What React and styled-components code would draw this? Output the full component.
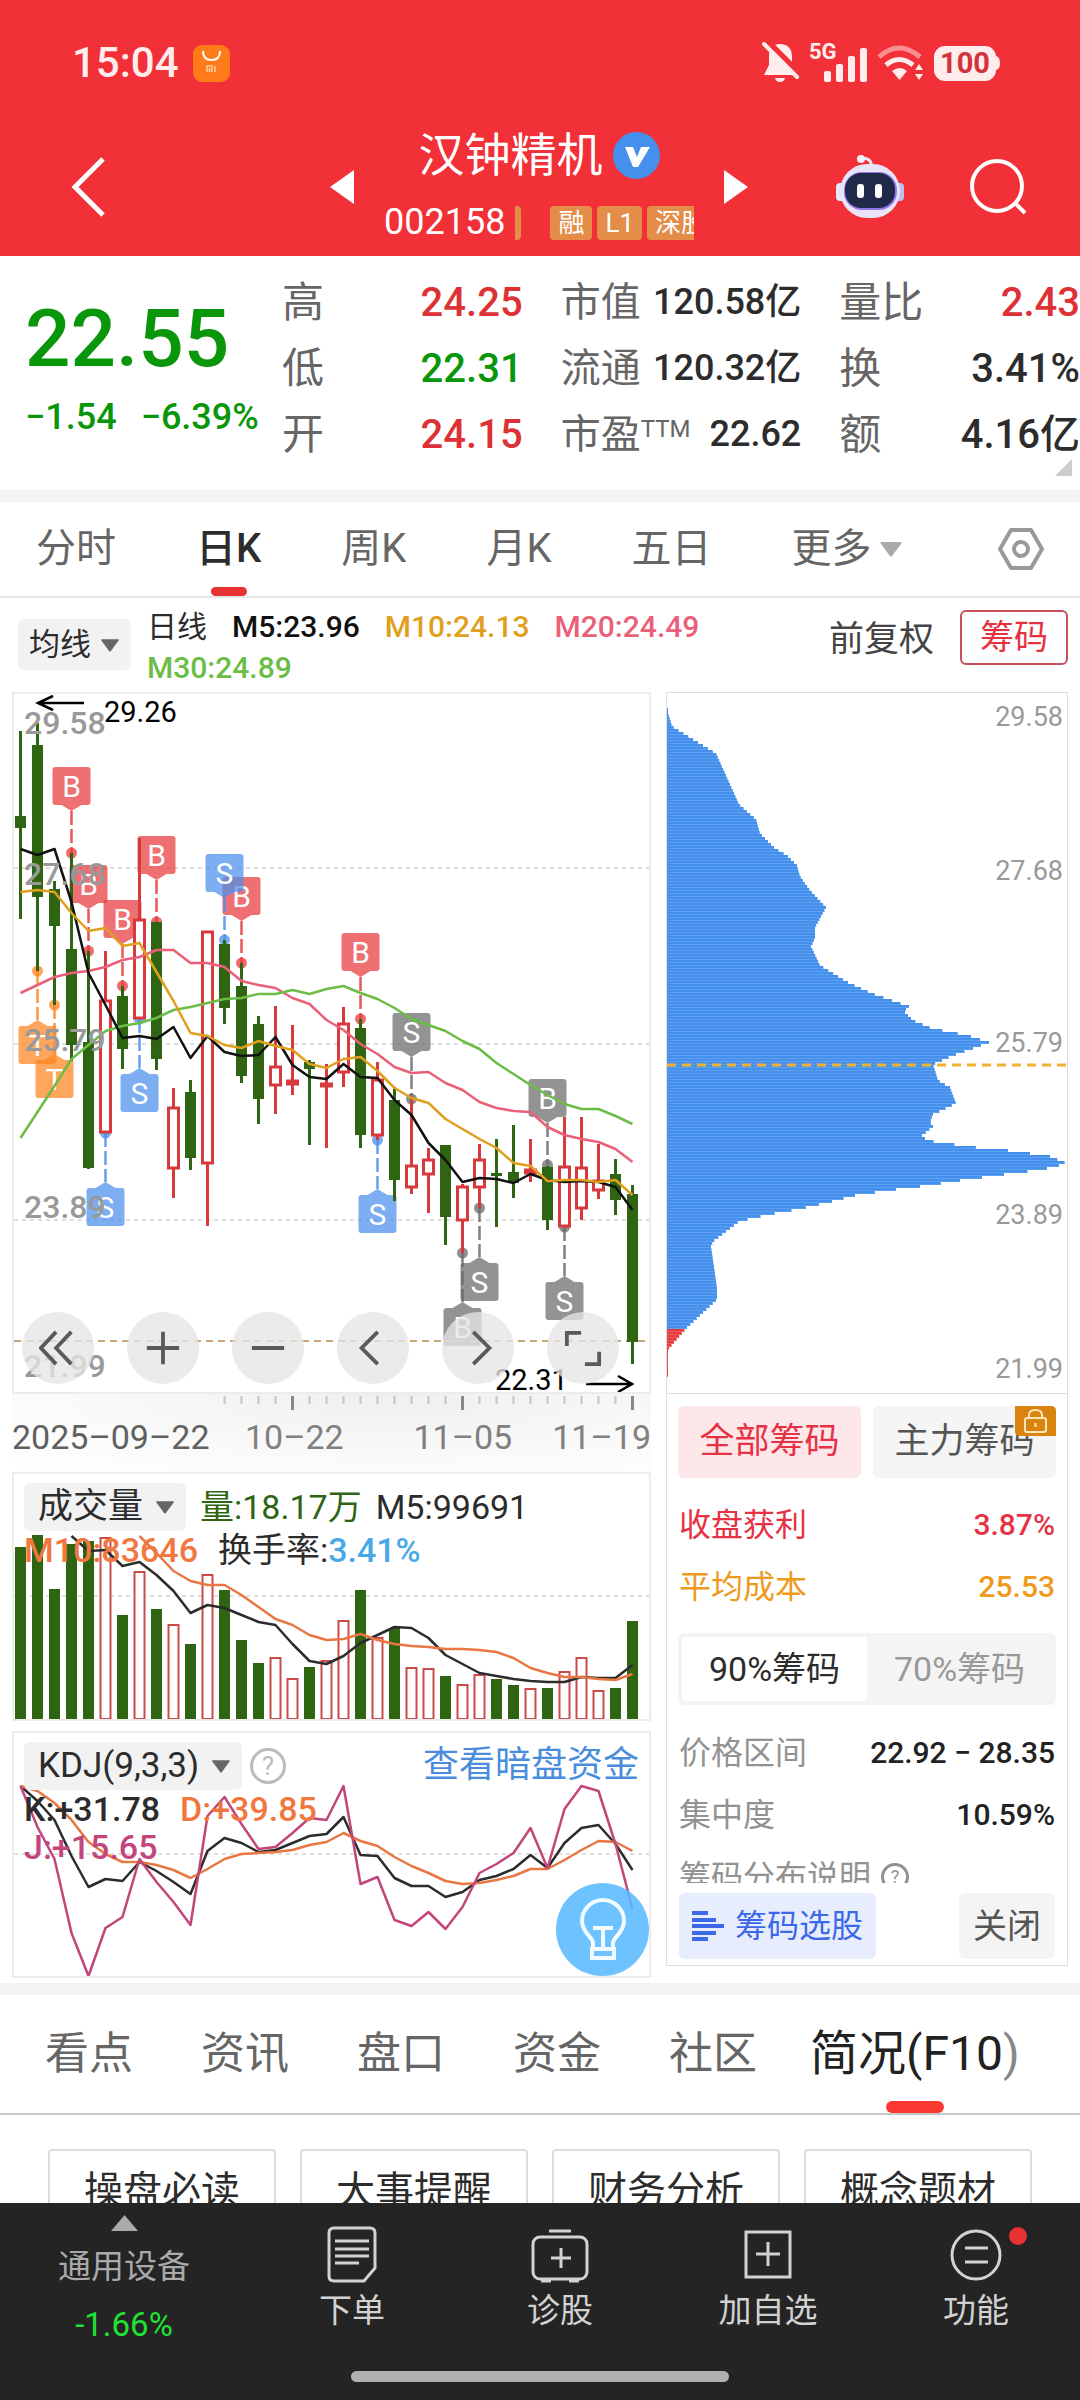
import React from "react";
import styled, { createGlobalStyle } from "styled-components";

const GREEN = "#2f6512";
const RED = "#d8393c";

const Global = createGlobalStyle`
  * { box-sizing: border-box; }
  html, body, #root { height: 100%; }
  body {
    margin: 0;
    background: #fff;
    color: #2c2c2c;
    font-family: Roboto, "Noto Sans CJK SC", sans-serif;
    line-height: 1.2;
  }
  button, select { font: inherit; color: inherit; }
  button { border: 0; padding: 0; background: none; cursor: pointer; }
  a { text-decoration: none; }
  svg { display: block; flex: none; }
`;

/* ---------- page frame ---------- */
const Page = styled.div`
  height: 100vh;
  display: flex;
  flex-direction: column;
`;
const Scroll = styled.main`
  flex: 1;
  min-height: 0;
  overflow: hidden;
`;
const Band = styled.div`
  height: 12px;
  background: #f4f4f4;
`;

/* ---------- header ---------- */
const Header = styled.header`
  flex: none;
  background: #f13038;
  color: #fff;
`;
const StatusBar = styled.div`
  display: flex;
  align-items: center;
  justify-content: space-between;
  height: 88px;
  padding: 38px 80px 0 72px;
`;
const StatusGroup = styled.div`
  display: flex;
  align-items: center;
  gap: ${(p) => p.$gap}px;
`;
const Clock = styled.span`
  font-size: 42px;
  font-weight: 500;
  line-height: 48px;
  color: #ffecec;
`;
const Signal = styled.span`
  display: flex;
  align-items: flex-end;
  height: 40px;
`;
const NetLabel = styled.span`
  align-self: flex-start;
  width: 15px;
  font-size: 22px;
  font-weight: 700;
  line-height: 18px;
  color: #ffecec;
`;
const Battery = styled.span`
  display: flex;
  align-items: center;
  justify-content: center;
  width: 62px;
  height: 35px;
  border-radius: 11px;
  background: #ffecec;
  color: #d2333a;
  font-size: 29px;
  font-weight: 700;
`;
const TitleBar = styled.div`
  display: grid;
  grid-template-columns: 1fr auto 1fr;
  align-items: center;
  height: 168px;
  padding: 30px 52px 0 50px;
`;
const IconButton = styled.button`
  display: flex;
  align-items: center;
  justify-content: center;
`;
const Back = styled.div`
  padding-left: 20px;
`;
const Switcher = styled.div`
  display: flex;
  align-items: center;
  gap: 30px;
`;
const StockInfo = styled.div`
  display: flex;
  flex-direction: column;
  align-items: center;
  gap: 22px;
  width: 310px;
  padding-bottom: 6px;
`;
const StockName = styled.h1`
  display: flex;
  align-items: center;
  gap: 10px;
  margin: 0;
  font-size: 46px;
  font-weight: 400;
  line-height: 56px;
  white-space: nowrap;
`;
const CodeRow = styled.div`
  display: flex;
  align-items: center;
  gap: 10px;
  width: 100%;
  height: 36px;
  font-size: 36px;
`;
const TagStrip = styled.div`
  flex: 1;
  display: flex;
  gap: 5px;
  overflow: hidden;
`;
const Tag = styled.span`
  flex: none;
  padding: 0 8px;
  border-radius: 4px;
  background: #e38d49;
  font-size: 26px;
  line-height: 34px;
`;
const TagTail = styled.span`
  flex: none;
  width: 6px;
  margin-right: 24px;
  border-radius: 0 4px 4px 0;
  background: #e38d49;
`;
const Actions = styled.div`
  display: flex;
  align-items: center;
  justify-content: flex-end;
  gap: 64px;
`;

/* ---------- quote ---------- */
const Quote = styled.section`
  position: relative;
  display: flex;
  padding: 14px 0 22px;
`;
const PriceBlock = styled.div`
  flex: none;
  width: 282px;
  padding: 21px 0 0 25px;
  color: #0a960a;
  font-weight: 500;
`;
const Price = styled.div`
  font-size: 80px;
  line-height: 96px;
`;
const Change = styled.div`
  display: flex;
  gap: 24px;
  font-size: 36px;
  line-height: 60px;
`;
const StatGrid = styled.dl`
  flex: 1;
  display: grid;
  grid-template-columns: repeat(3, 1fr);
  column-gap: 38px;
  margin: 0;
`;
const Stat = styled.div`
  display: flex;
  align-items: center;
  justify-content: space-between;
  height: 66px;
  white-space: nowrap;
`;
const StatLabel = styled.dt`
  display: flex;
  font-size: ${(p) => (p.$small ? 40 : 42)}px;
  color: #666;
`;
const Sup = styled.sup`
  font-size: 24px;
  line-height: 36px;
  align-self: flex-start;
`;
const StatValue = styled.dd`
  margin: 0;
  font-size: ${(p) => (p.$small ? 36 : 40)}px;
  font-weight: 500;
  color: ${(p) => p.$color || "#2c2c2c"};
`;
const Corner = styled.svg`
  position: absolute;
  right: 8px;
  bottom: 14px;
`;

/* ---------- period tabs ---------- */
const Tabs = styled.nav`
  display: flex;
  align-items: center;
  gap: 80px;
  height: 96px;
  padding: 0 36px;
  border-bottom: 2px solid #e6e6e6;
`;
const Tab = styled.button`
  position: relative;
  display: flex;
  align-items: center;
  gap: 8px;
  height: 94px;
  font-size: 40px;
  font-weight: ${(p) => (p.$active ? 500 : 400)};
  color: ${(p) => (p.$active ? "#2c2c2c" : "#666")};
  white-space: nowrap;
  &::after {
    content: "";
    display: ${(p) => (p.$active ? "block" : "none")};
    position: absolute;
    left: calc(50% - 18px);
    bottom: 0;
    width: 36px;
    height: 9px;
    border-radius: 5px;
    background: #e63232;
  }
`;
const Settings = styled(IconButton)`
  margin-left: auto;
`;

/* ---------- average row ---------- */
const AverageRow = styled.div`
  display: flex;
  height: 94px;
  padding: 0 12px 0 18px;
`;
const Picker = styled.label`
  position: relative;
  display: inline-flex;
  flex: none;
  margin-top: ${(p) => p.$drop || 0}px;
  height: ${(p) => p.$h}px;
  border-radius: 6px;
  background: #f2f2f2;
  svg {
    position: absolute;
    right: 12px;
    top: calc(50% - 6px);
    pointer-events: none;
  }
`;
const PickerSelect = styled.select`
  appearance: none;
  border: 0;
  padding: 0 ${(p) => p.$pr}px 0 ${(p) => p.$pl}px;
  background: none;
  font-size: ${(p) => p.$size}px;
  color: #2c2c2c;
`;
const Legend = styled.div`
  flex: 1;
  display: flex;
  flex-wrap: wrap;
  align-content: flex-start;
  column-gap: 25px;
  padding: 8px 40px 0 16px;
  font-size: 30px;
  line-height: 41px;
`;
const Ink = styled.span`
  color: ${(p) => p.$c};
  font-weight: ${(p) => (p.$medium ? 500 : 400)};
  white-space: nowrap;
`;
const Adjust = styled.button`
  align-self: flex-start;
  margin: 14px 26px 0 0;
  font-size: 35px;
  line-height: 56px;
  color: #444;
`;
const ChipToggle = styled.button`
  align-self: flex-start;
  margin-top: 12px;
  width: 108px;
  height: 55px;
  border: 2px solid #c8505c;
  border-radius: 6px;
  font-size: 34px;
  color: #e6323f;
`;

/* ---------- charts ---------- */
const Board = styled.div`
  display: grid;
  grid-template-columns: 639fr 402fr;
  gap: 15px;
  padding: 0 12px;
`;
const LeftColumn = styled.div`
  min-width: 0;
  display: flex;
  flex-direction: column;
`;
const Panel = styled.section`
  position: relative;
  border: 2px solid #ececec;
  margin-top: ${(p) => p.$mt || 0}px;
`;
const Plot = styled.svg`
  width: 100%;
  height: auto;
`;
const PlotHead = styled.div`
  position: absolute;
  inset: 0;
  padding: 9px 10px;
`;
const HeadLine = styled.div`
  display: flex;
  align-items: center;
  gap: ${(p) => p.$gap}px;
  height: 48px;
  font-size: 34px;
  white-space: nowrap;
`;
const SubLine = styled.div`
  display: flex;
  gap: 20px;
  font-size: 34px;
  line-height: 38px;
  white-space: nowrap;
`;
const Controls = styled.div`
  position: absolute;
  left: 8px;
  bottom: 8px;
  display: flex;
  gap: 33px;
`;
const RoundButton = styled.button`
  display: flex;
  align-items: center;
  justify-content: center;
  width: 72px;
  height: 72px;
  border-radius: 50%;
  background: rgba(230, 230, 230, 0.78);
`;
const DateAxis = styled.div`
  height: 78px;
  background: radial-gradient(ellipse at 60% 0, #efefef, #fafafa 60%, #fff);
`;
const Dates = styled.div`
  display: grid;
  grid-template-columns: 235fr 170fr 140fr 94fr;
  font-size: 34px;
  line-height: 38px;
  color: #808080;
  white-space: nowrap;
  & > :first-child { color: #606060; }
  & > :last-child { text-align: right; }
`;
const HelpButton = styled.button`
  width: ${(p) => p.$d}px;
  height: ${(p) => p.$d}px;
  border: 3px solid ${(p) => p.$c};
  border-radius: 50%;
  font-size: ${(p) => p.$d - 10}px;
  line-height: 1;
  color: ${(p) => p.$c};
`;
const DarkLink = styled.a`
  margin-left: auto;
  font-size: 36px;
  color: #4a8ddd;
`;
const BulbButton = styled.button`
  position: absolute;
  right: 0;
  bottom: 0;
  width: 93px;
  height: 93px;
`;

/* ---------- chip distribution ---------- */
const ChipPanel = styled.aside`
  min-width: 0;
  display: flex;
  flex-direction: column;
  margin-bottom: 17px;
  border: 1px solid #dedede;
`;
const ChipBody = styled.div`
  height: 490px;
  padding: 12px 11px 0;
  border-top: 1px solid #dedede;
  overflow: hidden;
`;
const ScopeRow = styled.div`
  display: grid;
  grid-template-columns: 1fr 1fr;
  gap: 12px;
  margin-bottom: 16px;
`;
const Scope = styled.button`
  position: relative;
  height: 72px;
  border-radius: 6px;
  font-size: 35px;
  background: ${(p) => (p.$on ? "#fee7e9" : "#f5f5f5")};
  color: ${(p) => (p.$on ? "#e63244" : "#555")};
  svg {
    position: absolute;
    top: 0;
    right: 0;
  }
`;
const Fact = styled.div`
  display: flex;
  align-items: center;
  justify-content: ${(p) => (p.$start ? "flex-start" : "space-between")};
  gap: 10px;
  height: 62px;
  padding: 0 1px;
  font-size: 32px;
  color: ${(p) => p.$c || "#929292"};
  white-space: nowrap;
`;
const FactValue = styled.strong`
  font-size: 30px;
  font-weight: 500;
  color: ${(p) => p.$c || "#222"};
`;
const Segments = styled.div`
  display: grid;
  grid-template-columns: 1fr 1fr;
  height: 72px;
  margin: 15px 0 17px;
  padding: 4px;
  border-radius: 6px;
  background: #f4f4f4;
`;
const Segment = styled.button`
  border-radius: 4px;
  font-size: 34px;
  background: ${(p) => (p.$on ? "#fff" : "none")};
  color: ${(p) => (p.$on ? "#2c2c2c" : "#999")};
`;
const ChipFoot = styled.div`
  display: flex;
  justify-content: space-between;
  padding: 10px 12px 6px;
`;
const FootButton = styled.button`
  display: flex;
  align-items: center;
  justify-content: center;
  gap: 11px;
  width: ${(p) => p.$w}px;
  height: 66px;
  border-radius: 6px;
  font-size: ${(p) => (p.$blue ? 32 : 34)}px;
  background: ${(p) => (p.$blue ? "#e8edfe" : "#f4f4f4")};
  color: ${(p) => (p.$blue ? "#3c68e8" : "#555")};
`;

/* ---------- info tabs ---------- */
const InfoTabs = styled.nav`
  display: flex;
  height: 120px;
  padding-left: 11px;
  border-bottom: 2px solid #c8c8c8;
`;
const InfoTab = styled.button`
  position: relative;
  padding: 0 ${(p) => (p.$active ? 19 : 34)}px;
  font-size: ${(p) => (p.$active ? 48 : 44)}px;
  color: ${(p) => (p.$active ? "#222" : "#666")};
  white-space: nowrap;
  span { color: #888; }
  &::after {
    content: "";
    display: ${(p) => (p.$active ? "block" : "none")};
    position: absolute;
    left: calc(50% - 29px);
    bottom: 0;
    width: 58px;
    height: 12px;
    border-radius: 6px;
    background: #fa3a32;
  }
`;
const Topics = styled.div`
  display: grid;
  grid-template-columns: repeat(4, 1fr);
  gap: 24px;
  padding: 34px 48px;
`;
const Topic = styled.a`
  height: 84px;
  border: 2px solid #dcdcdc;
  border-radius: 4px;
  font-size: 39px;
  line-height: 80px;
  text-align: center;
  color: #2c2c2c;
`;

/* ---------- bottom bar ---------- */
const BottomBar = styled.footer`
  flex: none;
  height: 197px;
  background: #242424;
  color: #d2d2d2;
`;
const NavItems = styled.nav`
  display: grid;
  grid-template-columns: 248fr repeat(4, 208fr);
  height: 168px;
`;
const NavItem = styled.button`
  position: relative;
  display: flex;
  flex-direction: column;
  align-items: center;
  padding-top: 22px;
  gap: 6px;
  font-size: 33px;
  line-height: 44px;
`;
const IndexItem = styled(NavItem)`
  padding-top: 12px;
  gap: 14px;
  color: #aaa;
  b { color: #1fe332; font-weight: 400; }
`;
const Dot = styled.i`
  position: absolute;
  left: calc(50% + 33px);
  top: 24px;
  width: 18px;
  height: 18px;
  border-radius: 50%;
  background: #e63232;
`;
const HomeBar = styled.div`
  width: 35%;
  height: 11px;
  margin: 0 auto;
  border-radius: 6px;
  background: #b0b0b0;
`;

/* ---------- chart data ---------- */
const px = (i) => 8.5 + 17 * i;
const path = (values, start = 0) =>
  values.map((v, k) => `${px(k + start)},${v}`).join(" ");

// [up?, high, body top, body bottom, low]
const CANDLES = [
  [0, 39, 124, 136, 227], [0, 31, 53, 205, 279], [0, 189, 197, 234, 313],
  [0, 161, 257, 353, 369], [0, 259, 350, 476, 477], [1, 259, 308, 441, 441],
  [0, 294, 304, 357, 377], [1, 146, 227, 327, 327], [0, 230, 230, 367, 378],
  [1, 396, 415, 477, 506], [0, 388, 400, 466, 478], [1, 239, 239, 472, 534],
  [0, 248, 252, 316, 332], [0, 271, 294, 384, 391], [0, 324, 332, 407, 432],
  [1, 314, 374, 394, 422], [1, 333, 388, 393, 403], [0, 368, 370, 377, 453],
  [1, 372, 391, 395, 456], [1, 315, 331, 381, 395], [0, 327, 336, 443, 456],
  [1, 370, 387, 444, 448], [0, 395, 408, 488, 509], [1, 407, 473, 496, 502],
  [1, 456, 467, 483, 521], [0, 453, 453, 525, 553], [1, 492, 494, 529, 561],
  [1, 452, 467, 496, 516], [0, 447, 481, 484, 535], [0, 433, 480, 491, 506],
  [1, 447, 477, 482, 490], [0, 474, 475, 528, 538], [1, 425, 474, 535, 535],
  [1, 425, 475, 517, 528], [1, 452, 488, 499, 507], [0, 467, 482, 508, 523],
  [0, 493, 502, 650, 672],
];
const MA5 = [157, 163, 157, 210, 281, 313, 346, 344, 347, 335, 366, 344, 360, 364, 363, 345, 373, 385, 387, 372, 385, 386, 408, 423, 451, 468, 490, 486, 487, 491, 482, 488, 490, 489, 490, 495, 518];
const MA10 = [200, 198, 200, 221, 239, 236, 254, 251, 280, 309, 341, 344, 353, 356, 349, 354, 358, 372, 376, 367, 365, 379, 396, 406, 411, 427, 437, 447, 456, 471, 474, 489, 488, 488, 490, 488, 503];
const MA20 = [301, 293, 285, 281, 279, 275, 268, 265, 258, 258, 271, 271, 275, 289, 293, 296, 306, 312, 328, 338, 352, 362, 375, 381, 380, 391, 398, 410, 416, 419, 420, 435, 443, 447, 450, 457, 470];
const MA30 = [446, 420, 394, 367, 353, 339, 334, 331, 326, 318, 315, 311, 307, 306, 302, 302, 298, 302, 297, 294, 301, 307, 316, 327, 333, 339, 349, 357, 371, 382, 393, 403, 412, 417, 417, 424, 432];

// [candle, y of the dot, letter, tone, above the candle?]
const MARKS = [
  [3, 161, "B", "red", 1], [4, 259, "B", "red", 1], [6, 294, "B", "red", 1],
  [8, 230, "B", "red", 1], [13, 271, "B", "red", 1], [20, 327, "B", "red", 1],
  [12, 248, "S", "blue", 1], [23, 407, "S", "gray", 1], [31, 473, "B", "gray", 1],
  [1, 279, "T", "orange", 0], [2, 313, "T", "orange", 0], [5, 441, "S", "blue", 0],
  [7, 327, "S", "blue", 0], [21, 448, "S", "blue", 0], [27, 516, "S", "gray", 0],
  [26, 561, "B", "gray", 0], [32, 535, "S", "gray", 0],
];
const TONES = { red: "#e83a3c", blue: "#4a90ec", gray: "#6a6a6a", orange: "#ff8420" };

const VOLUME = [75, 63, 117, 72, 69, 65, 143, 99, 137, 152, 172, 102, 118, 168, 191, 185, 206, 195, 188, 148, 118, 165, 156, 195, 196, 204, 212, 202, 207, 213, 216, 216, 199, 185, 218, 216, 149];
const VOL_UP = [5, 7, 9, 11, 15, 16, 18, 19, 21, 23, 24, 26, 27, 30, 32, 33, 34];
const VOL5 = [64, 79, 78, 94, 90, 103, 119, 141, 133, 136, 143, 150, 153, 172, 189, 192, 184, 171, 163, 155, 156, 166, 183, 192, 201, 204, 207, 209, 210, 210, 205, 206, 206, 193];
const VOL10 = [64, 81, 99, 109, 113, 113, 123, 135, 147, 153, 163, 168, 167, 162, 168, 172, 174, 175, 177, 177, 178, 180, 186, 196, 201, 205, 205, 207, 208, 202];

const K = [55, 70, 89, 125, 156, 148, 150, 131, 140, 151, 163, 120, 107, 112, 121, 119, 112, 105, 103, 86, 124, 125, 147, 155, 155, 166, 161, 149, 145, 138, 124, 137, 112, 97, 94, 113, 139];
const D = [55, 60, 72, 89, 111, 123, 131, 131, 134, 139, 147, 138, 128, 123, 122, 121, 119, 114, 111, 102, 110, 115, 126, 135, 142, 150, 153, 152, 149, 145, 138, 138, 129, 119, 110, 111, 120];
const J = [55, 96, 128, 202, 245, 197, 186, 128, 151, 171, 194, 85, 66, 93, 118, 116, 102, 87, 89, 55, 153, 146, 189, 195, 181, 198, 176, 142, 133, 122, 97, 137, 78, 55, 60, 113, 178];

// [width, y] outline of the cost distribution
const COST = [[1, 16], [6, 33], [50, 60], [73, 111], [90, 126], [94, 140], [109, 155], [121, 162], [131, 172], [134, 183], [144, 197], [160, 214], [149, 234], [149, 245], [145, 253], [154, 272], [182, 289], [206, 300], [243, 313], [238, 318], [247, 327], [266, 335], [302, 342], [323, 349], [307, 355], [287, 362], [267, 371], [272, 387], [284, 394], [290, 410], [267, 421], [264, 429], [267, 433], [256, 442], [261, 447], [274, 449], [317, 455], [342, 457], [364, 460], [384, 463], [401, 470], [377, 476], [338, 481], [294, 487], [262, 492], [222, 497], [189, 502], [166, 508], [131, 516], [103, 521], [73, 528], [47, 548], [45, 553], [51, 595], [51, 606], [20, 635], [2, 656], [2, 684]];
const costAt = (y) => {
  const k = COST.findIndex((p) => p[1] > y);
  if (k < 1) return 2;
  const [w0, y0] = COST[k - 1];
  const [w1, y1] = COST[k];
  return w0 + ((w1 - w0) * (y - y0)) / (y1 - y0);
};

/* ---------- small drawings ---------- */
const Caret = ({ w = 18, c = "#666" }) => (
  <svg width={w} height={Math.round(w * 0.7)} viewBox="0 0 20 14" aria-hidden="true">
    <path d="M1 0h18q1.500 0 .6 1.400L11 13q-1 1.300-2 0L.4 1.400Q-.5 0 1 0z" fill={c} />
  </svg>
);
const Grid = ({ ys }) =>
  ys.map((y) => <path key={y} d={`M2 ${y}H637`} stroke="#dedede" strokeWidth="2" strokeDasharray="4 4" />);
const Line = ({ v, start, c }) => (
  <polyline points={path(v, start)} fill="none" stroke={c} strokeWidth="2.500" strokeLinejoin="round" />
);

function Mark({ mark }) {
  const [i, y, letter, tone, above] = mark;
  const x = px(i);
  const c = TONES[tone];
  const top = above ? y - 86 : y + 55;
  const tip = above
    ? `M${x - 10} ${top + 38}l10 6 10-6z`
    : `M${x - 10} ${top}l10-6 10 6z`;
  return (
    <g>
      <path d={above ? `M${x} ${top + 44}V${y}` : `M${x} ${y}V${top - 6}`} stroke={c} strokeWidth="2.500" strokeDasharray="14 4" opacity=".85" />
      <circle cx={x} cy={y} r="5.500" fill={c} opacity=".75" />
      <g opacity=".72">
        <rect x={x - 19} y={top} width="38" height="38" rx="3" fill={c} />
        <path d={tip} fill={c} />
      </g>
      <text x={x} y={top + 30} textAnchor="middle" fontSize="30" fill="#fff">{letter}</text>
    </g>
  );
}

function PriceChart() {
  return (
    <Plot viewBox="2 2 635 698" role="img" aria-label="日K线">
      <Grid ys={[176, 352, 528]} />
      {MARKS.map((m) => <Mark key={m[0]} mark={m} />)}
      <path d="M2 649H637" stroke="#c8a878" strokeWidth="2" strokeDasharray="7 5" />
      {CANDLES.map(([up, hi, a, b, lo], i) => {
        const x = px(i);
        return up ? (
          <g key={i} stroke={RED} strokeWidth="3" fill="none">
            <path d={`M${x} ${hi}V${a}M${x} ${b}V${lo}`} />
            <rect x={x - 5} y={a + 1} width="10" height={Math.max(b - a - 2, 1)} fill="#fff" />
          </g>
        ) : (
          <g key={i} fill={GREEN}>
            <rect x={x - 1.5} y={hi} width="3" height={lo - hi} />
            <rect x={x - 5.5} y={a} width="11" height={b - a} />
          </g>
        );
      })}
      <Line v={MA20} c="#ea6078" />
      <Line v={MA30} c="#6bbd45" />
      <Line v={MA5} c="#111" />
      <Line v={MA10} c="#e0a01e" />
      <g fontSize="32" fontWeight="500" fill="#999">
        <text x="12" y="42">29.58</text>
        <text x="12" y="193">27.68</text>
        <text x="12" y="359">25.79</text>
        <text x="12" y="526">23.89</text>
        <text x="12" y="685">21.99</text>
      </g>
      <g fontSize="29" fill="#000">
        <text x="92" y="30">29.26</text>
        <text x="483" y="698">22.31</text>
      </g>
      <path d="M72 11H26M41 4L26 11l15 7M574 692h46M606 684l14 8-14 8" fill="none" stroke="#000" strokeWidth="2.500" />
    </Plot>
  );
}

function TickRow() {
  return (
    <Plot viewBox="0 0 639 24" aria-hidden="true">
      {Array.from({ length: 25 }, (_, k) => k + 12).map((i) => {
        const tall = i % 10 === 6;
        return <path key={i} d={`M${px(i)} 2v${tall ? 14 : 8}`} stroke={tall ? "#888" : "#c4c4c4"} strokeWidth={tall ? 3 : 2} />;
      })}
    </Plot>
  );
}

function VolumeChart() {
  return (
    <Plot viewBox="2 2 635 245" role="img" aria-label="成交量">
      <Grid ys={[124]} />
      {VOLUME.map((y, i) =>
        VOL_UP.includes(i) ? (
          <rect key={i} x={px(i) - 5} y={y + 1} width="10" height={246 - y} fill="#fff" stroke="#cc4a4a" strokeWidth="2" />
        ) : (
          <rect key={i} x={px(i) - 5.5} y={y} width="11" height={248 - y} fill={GREEN} />
        )
      )}
      <Line v={VOL5} start={3} c="#2c2c2c" />
      <Line v={VOL10} start={7} c="#e87744" />
    </Plot>
  );
}

function KdjChart() {
  return (
    <Plot viewBox="2 2 635 243" role="img" aria-label="KDJ">
      <Grid ys={[123]} />
      <Line v={K} c="#2c2c2c" />
      <Line v={D} c="#e87744" />
      <Line v={J} c="#c2467c" />
    </Plot>
  );
}

function CostChart() {
  const rows = [];
  for (let y = 16; y < 684; y += 3) rows.push(y);
  return (
    <Plot viewBox="1 1 400 700" role="img" aria-label="筹码分布">
      {rows.map((y) => {
        const red = y >= 635;
        return (
          <g key={y}>
            <rect x="1" y={y} width={Math.max(costAt(y) - 1, 1)} height="3" fill={red ? "#e63a3c" : "#4590ec"} />
            <rect x="1" y={y + 2} width={Math.max(costAt(y) - 1, 1)} height="1" fill={red ? "#ec6264" : "#5c9ff0"} />
          </g>
        );
      })}
      <path d="M1 373H401" stroke="#f0b232" strokeWidth="3" strokeDasharray="9 6" />
      <g fontSize="27" fill="#999" textAnchor="end">
        <text x="397" y="34">29.58</text>
        <text x="397" y="188">27.68</text>
        <text x="397" y="360">25.79</text>
        <text x="397" y="532">23.89</text>
        <text x="397" y="686">21.99</text>
      </g>
    </Plot>
  );
}

const Stroke = ({ d, size = 40, w = 4, c = "#5a5a5a" }) => (
  <svg width={size} height={size} viewBox="0 0 40 40" fill="none" stroke={c} strokeWidth={w} aria-hidden="true">
    <path d={d} />
  </svg>
);

const CONTROLS = [
  ["最早", "M18 3L2 20l16 17M34 3L18 20l16 17"],
  ["放大", "M20 3v34M3 20h34"],
  ["缩小", "M3 20h34"],
  ["左移", "M25 3L8 20l17 17"],
  ["右移", "M15 3l17 17-17 17"],
  ["全屏", "M3 18V4h15M37 24v13H22"],
];

const STATS = [
  ["高", "24.25", "#dc3236"], ["市值", "120.58亿"], ["量比", "2.43", "#dc3236"],
  ["低", "22.31", "#0a960a"], ["流通", "120.32亿"], ["换", "3.41%"],
  ["开", "24.15", "#dc3236"], ["市盈", "22.62"], ["额", "4.16亿"],
];

function StatusIcons() {
  return (
    <StatusGroup $gap={9}>
      <svg width="38" height="42" viewBox="0 0 38 42" aria-label="静音">
        <path d="M18 2c8 0 12 5 12 13v8l3 10H2l5-10v-8C7 7 10 2 18 2z" fill="#ffecec" />
        <path d="M13 36h10q-1 4-5 4t-5-4z" fill="#ffecec" />
        <path d="M4-2l36 36" stroke="#f13038" strokeWidth="6" />
        <path d="M2 2l33 33" stroke="#ffecec" strokeWidth="4" strokeLinecap="round" />
      </svg>
      <Signal>
        <NetLabel>5G</NetLabel>
        <svg width="44" height="36" viewBox="0 0 44 36" fill="#ffecec" aria-label="信号">
          <rect x="0" y="24" width="7" height="11" rx="2" />
          <rect x="12" y="17" width="7" height="18" rx="2" />
          <rect x="24" y="9" width="7" height="26" rx="2" />
          <rect x="36" y="1" width="7" height="34" rx="2" />
        </svg>
      </Signal>
      <svg width="48" height="36" viewBox="0 0 48 36" fill="none" strokeWidth="5" aria-label="无线网络">
        <path d="M2 12Q22-6 43 12" stroke="#f98f93" />
        <path d="M9 20q13-11 27 0" stroke="#ffecec" />
        <path d="M15 26q8-6 15 0l-7.500 9z" fill="#ffecec" />
        <path d="M42 19l4 6h-8zM42 35l-4-6h8z" fill="#ffecec" />
      </svg>
      <StatusGroup $gap={0}>
        <Battery>100</Battery>
        <svg width="4" height="14" aria-hidden="true"><path d="M0 0q4 1 4 7t-4 7z" fill="#ffecec" /></svg>
      </StatusGroup>
    </StatusGroup>
  );
}

function Robot() {
  return (
    <svg width="68" height="66" viewBox="0 0 68 66" aria-hidden="true">
      <path d="M35 14q2-9-8-10" fill="none" stroke="#f3e6f2" strokeWidth="3" />
      <circle cx="25" cy="5" r="4" fill="#f6eef8" />
      <rect x="0" y="29" width="9" height="18" rx="4" fill="#e4e6fa" />
      <rect x="59" y="29" width="9" height="18" rx="4" fill="#b9c0f2" />
      <rect x="4" y="10" width="60" height="54" rx="27" fill="#e9e4f8" />
      <rect x="8" y="18" width="53" height="38" rx="18" fill="#9478ea" />
      <rect x="9" y="19" width="50" height="35" rx="16" fill="#1f2a4a" />
      <rect x="21" y="30" width="7" height="14" rx="3" fill="#fff" />
      <rect x="39" y="30" width="7" height="14" rx="3" fill="#fff" />
    </svg>
  );
}

export default function App() {
  return (
    <Page>
      <Global />
      <Header>
        <StatusBar>
          <StatusGroup $gap={14}>
            <Clock>15:04</Clock>
            <svg width="37" height="37" viewBox="0 0 37 37" aria-hidden="true">
              <rect width="37" height="37" rx="9" fill="#ff7a18" />
              <path d="M10 6q0 9 8.500 9T27 6" fill="none" stroke="#fff" strokeWidth="2" />
              <path d="M14 27v-6h5v6M16.500 23v4M22 21v6" fill="none" stroke="#ffd0a8" strokeWidth="1.500" />
            </svg>
          </StatusGroup>
          <StatusIcons />
        </StatusBar>
        <TitleBar>
          <Back>
            <IconButton aria-label="返回">
              <svg width="36" height="62" viewBox="0 0 36 62" fill="none" stroke="#fff" strokeWidth="5">
                <path d="M33 3L5 31l28 28" />
              </svg>
            </IconButton>
          </Back>
          <Switcher>
            <IconButton aria-label="上一只">
              <svg width="24" height="34" viewBox="0 0 24 34"><path d="M24 0v34L0 17z" fill="#fff" /></svg>
            </IconButton>
            <StockInfo>
              <StockName>
                汉钟精机
                <svg width="47" height="47" viewBox="0 0 47 47" aria-hidden="true">
                  <circle cx="23.500" cy="23.500" r="23.500" fill="#4590ec" />
                  <path d="M12 15h8l4 10 4-10h9L25 35h-5z" fill="#fff" />
                </svg>
              </StockName>
              <CodeRow>
                <span>002158</span>
                <TagStrip>
                  <TagTail />
                  <Tag>融</Tag>
                  <Tag>L1</Tag>
                  <Tag>深股</Tag>
                </TagStrip>
              </CodeRow>
            </StockInfo>
            <IconButton aria-label="下一只">
              <svg width="24" height="34" viewBox="0 0 24 34"><path d="M0 0v34l24-17z" fill="#fff" /></svg>
            </IconButton>
          </Switcher>
          <Actions>
            <IconButton aria-label="智能助手"><Robot /></IconButton>
            <IconButton aria-label="搜索">
              <svg width="60" height="60" viewBox="0 0 60 60" fill="none" stroke="#fff" strokeWidth="4">
                <circle cx="29" cy="29" r="25" />
                <path d="M46 45l11 11" />
              </svg>
            </IconButton>
          </Actions>
        </TitleBar>
      </Header>

      <Scroll>
        <Quote>
          <PriceBlock>
            <Price>22.55</Price>
            <Change><span>−1.54</span><span>−6.39%</span></Change>
          </PriceBlock>
          <StatGrid>
            {STATS.map(([label, value, color], i) => (
              <Stat key={label}>
                <StatLabel $small={i % 3 === 1}>
                  {label}
                  {label === "市盈" && <Sup>TTM</Sup>}
                </StatLabel>
                <StatValue $small={i % 3 === 1} $color={color}>{value}</StatValue>
              </Stat>
            ))}
          </StatGrid>
          <Corner width="17" height="17" viewBox="0 0 17 17"><path d="M17 0v17H0z" fill="#ccc" /></Corner>
        </Quote>
        <Band />
        <Tabs>
          <Tab>分时</Tab>
          <Tab $active>日K</Tab>
          <Tab>周K</Tab>
          <Tab>月K</Tab>
          <Tab>五日</Tab>
          <Tab>更多<Caret w={22} c="#aaa" /></Tab>
          <Settings aria-label="设置">
            <svg width="46" height="44" viewBox="0 0 46 44" fill="none" stroke="#999" strokeWidth="4" strokeLinejoin="round">
              <path d="M13 3h20l11 19-11 19H13L2 22z" />
              <circle cx="23" cy="22" r="7" />
            </svg>
          </Settings>
        </Tabs>

        <AverageRow>
          <Picker $h={51} $drop={21}>
            <PickerSelect aria-label="主图指标" $size={31} $pl={11} $pr={40}>
              <option>均线</option>
            </PickerSelect>
            <Caret />
          </Picker>
          <Legend>
            <Ink $c="#2c2c2c">日线</Ink>
            <Ink $medium $c="#111">M5:23.96</Ink>
            <Ink $medium $c="#e0a01e">M10:24.13</Ink>
            <Ink $medium $c="#ea6078">M20:24.49</Ink>
            <Ink $medium $c="#6bbd45">M30:24.89</Ink>
          </Legend>
          <Adjust>前复权</Adjust>
          <ChipToggle>筹码</ChipToggle>
        </AverageRow>

        <Board>
          <LeftColumn>
            <Panel>
              <PriceChart />
              <Controls>
                {CONTROLS.map(([name, d]) => (
                  <RoundButton key={name} aria-label={name}><Stroke d={d} size={38} /></RoundButton>
                ))}
              </Controls>
            </Panel>
            <DateAxis>
              <TickRow />
              <Dates>
                <span>2025–09–22</span>
                <span>10–22</span>
                <span>11–05</span>
                <span>11–19</span>
              </Dates>
            </DateAxis>
            <Panel>
              <VolumeChart />
              <PlotHead>
                <HeadLine $gap={14}>
                  <Picker $h={48}>
                    <PickerSelect aria-label="副图指标" $size={35} $pl={14} $pr={42}>
                      <option>成交量</option>
                    </PickerSelect>
                    <Caret />
                  </Picker>
                  <Ink $c={GREEN}>量:18.17万</Ink>
                  <Ink $c="#2c2c2c">M5:99691</Ink>
                </HeadLine>
                <SubLine>
                  <Ink $medium $c="#f07840">M10:83646</Ink>
                  <span>换手率:<Ink $medium $c="#48a8e8">3.41%</Ink></span>
                </SubLine>
              </PlotHead>
            </Panel>
            <Panel $mt={10}>
              <KdjChart />
              <PlotHead>
                <HeadLine $gap={8}>
                  <Picker $h={48}>
                    <PickerSelect aria-label="第二副图指标" $size={35} $pl={14} $pr={42}>
                      <option>KDJ(9,3,3)</option>
                    </PickerSelect>
                    <Caret />
                  </Picker>
                  <HelpButton $d={36} $c="#bbb" aria-label="指标说明">?</HelpButton>
                  <DarkLink href="#funds">查看暗盘资金</DarkLink>
                </HeadLine>
                <SubLine>
                  <Ink $medium $c="#2c2c2c">K:+31.78</Ink>
                  <Ink $medium $c="#f07840">D:+39.85</Ink>
                </SubLine>
                <SubLine><Ink $medium $c="#c2467c">J:+15.65</Ink></SubLine>
              </PlotHead>
              <BulbButton aria-label="提示">
                <svg width="93" height="93" viewBox="0 0 93 93" fill="none" stroke="#f2fcff" strokeWidth="4">
                  <circle cx="46.500" cy="46.500" r="46.500" fill="#5abaff" fillOpacity=".88" stroke="none" />
                  <path d="M37 66v-6c0-6-11-10-11-22a21 21 0 0 1 42 0c0 12-11 16-11 22v6" />
                  <path d="M37 45h20M47 45v21M36 66h22v9H36z" />
                </svg>
              </BulbButton>
            </Panel>
          </LeftColumn>

          <ChipPanel>
            <CostChart />
            <ChipBody>
              <ScopeRow>
                <Scope $on>全部筹码</Scope>
                <Scope>
                  主力筹码
                  <svg width="41" height="30" viewBox="0 0 41 30" fill="none" stroke="#ffe6b8" strokeWidth="2">
                    <path d="M0 0h36q5 0 5 5v25H5q-5 0-5-5z" fill="#da8410" stroke="none" />
                    <rect x="10" y="12" width="21" height="14" rx="2" />
                    <path d="M14 12V9q0-5 6.500-5T27 9v3M20.500 17v4" />
                  </svg>
                </Scope>
              </ScopeRow>
              <Fact $c="#e63244">收盘获利<FactValue $c="#e63244">3.87%</FactValue></Fact>
              <Fact $c="#ee9a1c">平均成本<FactValue $c="#ee9a1c">25.53</FactValue></Fact>
              <Segments>
                <Segment $on>90%筹码</Segment>
                <Segment>70%筹码</Segment>
              </Segments>
              <Fact>价格区间<FactValue>22.92 − 28.35</FactValue></Fact>
              <Fact>集中度<FactValue>10.59%</FactValue></Fact>
              <Fact $start>筹码分布说明<HelpButton $d={28} $c="#929292" aria-label="说明">?</HelpButton></Fact>
            </ChipBody>
            <ChipFoot>
              <FootButton $w={197} $blue>
                <svg width="32" height="32" viewBox="0 0 32 32" stroke="#3c68e8" strokeWidth="4" aria-hidden="true">
                  <path d="M0 3h16M0 10h24M0 16h32M0 23h24M0 29h16" />
                </svg>
                筹码选股
              </FootButton>
              <FootButton $w={96}>关闭</FootButton>
            </ChipFoot>
          </ChipPanel>
        </Board>

        <Band />
        <InfoTabs>
          <InfoTab>看点</InfoTab>
          <InfoTab>资讯</InfoTab>
          <InfoTab>盘口</InfoTab>
          <InfoTab>资金</InfoTab>
          <InfoTab>社区</InfoTab>
          <InfoTab $active>简况(F10<span>)</span></InfoTab>
        </InfoTabs>
        <Topics>
          <Topic href="#read">操盘必读</Topic>
          <Topic href="#events">大事提醒</Topic>
          <Topic href="#finance">财务分析</Topic>
          <Topic href="#concepts">概念题材</Topic>
        </Topics>
      </Scroll>

      <BottomBar>
        <NavItems>
          <IndexItem>
            <svg width="27" height="16" viewBox="0 0 27 16" aria-hidden="true"><path d="M13.500 0L27 16H0z" fill="#aaa" /></svg>
            <span>通用设备</span>
            <b>-1.66%</b>
          </IndexItem>
          <NavItem>
            <svg width="50" height="58" viewBox="0 0 50 58" fill="none" stroke="#d2d2d2" strokeWidth="3">
              <path d="M7 3h36q5 0 5 5v35L37 56H7q-5 0-5-5V8q0-5 5-5zM8 16h34M8 24h34M8 31h34M8 38h24" />
            </svg>
            下单
          </NavItem>
          <NavItem>
            <svg width="58" height="58" viewBox="0 0 58 58" fill="none" stroke="#d2d2d2" strokeWidth="3">
              <path d="M18 6h22" />
              <rect x="2" y="12" width="54" height="42" rx="7" />
              <path d="M20 33h20M30 23v20M10 56h10M38 56h10" />
            </svg>
            诊股
          </NavItem>
          <NavItem>
            <svg width="48" height="58" viewBox="0 0 48 58" fill="none" stroke="#d2d2d2" strokeWidth="3">
              <rect x="2" y="7" width="44" height="45" />
              <path d="M12 29h24M24 17v24" />
            </svg>
            加自选
          </NavItem>
          <NavItem>
            <svg width="52" height="58" viewBox="0 0 52 58" fill="none" stroke="#d2d2d2" strokeWidth="3">
              <circle cx="26" cy="30" r="24" />
              <path d="M15 23h23M15 37h23" />
            </svg>
            功能
            <Dot />
          </NavItem>
        </NavItems>
        <HomeBar />
      </BottomBar>
    </Page>
  );
}
